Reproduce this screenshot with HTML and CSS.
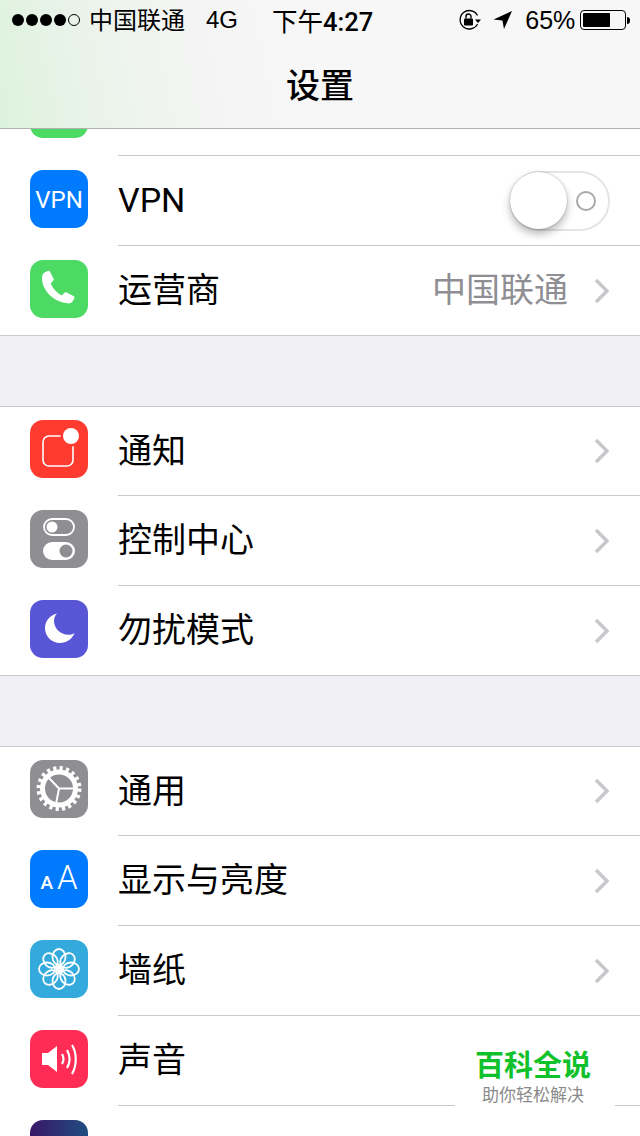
FILE: index.html
```html
<!DOCTYPE html>
<html lang="zh-CN">
<head>
    <meta charset="UTF-8">
    <meta name="viewport" content="width=device-width, initial-scale=1.0">
    <title>设置</title>
    <link rel="stylesheet" href="styles.css">
</head>
<body>

    <header class="nav">
        <div class="status">
            <div class="dots">
                <span class="dot"></span><span class="dot"></span><span class="dot"></span><span class="dot"></span><span class="dot empty"></span>
            </div>
            <span class="carrier">中国联通</span>
            <span class="net">4G</span>
            <span class="time">下午<span class="clock">4:27</span></span>
            <svg class="lock-icon" width="24" height="22" viewBox="0 0 24 22">
                <path d="M19.5 6.5A9.2 9.2 0 1 0 19.5 15" fill="none" stroke="#000" stroke-width="1.3"/>
                <path d="M17 10.5h6l-3 3.4z" fill="#000"/>
                <rect x="6" y="9.500" width="9" height="7" rx="1" fill="#000"/>
                <path d="M8 9.500V7.500a2.500 2.500 0 0 1 5 0v2" fill="none" stroke="#000" stroke-width="1.4"/>
            </svg>
            <svg class="arrow-icon" width="20" height="20" viewBox="0 0 20 20">
                <path d="M0.500 9.500L19 1l-8 18-1.600-8.600z" fill="#000"/>
            </svg>
            <span class="percent">65%</span>
            <div class="battery"><div class="battery-fill"></div></div>
            <div class="battery-nub"></div>
        </div>
        <h1 class="title">设置</h1>
    </header>

    <section class="group top-group">
        <div class="row row-cut">
            <div class="icon green"></div>
            <div class="row-body"></div>
        </div>
        <div class="row">
            <div class="icon blue vpn-text">VPN</div>
            <div class="row-body">
                <span class="label latin">VPN</span>
                <div class="toggle"><div class="knob"></div><div class="ring"></div></div>
            </div>
        </div>
        <div class="row">
            <div class="icon green">
                <svg width="58" height="58" viewBox="0 0 58 58">
                    <path d="M14.500 12.500l3.200-1.600c1-.4 1.800-.1 2.400 1l3.400 6.600c.5 1 .2 1.800-.6 2.600l-2.200 2.100c1.800 5 6.200 9.800 11.200 12.200l2.300-2.300c.8-.8 1.600-1 2.600-.5l6.600 3.500c1.200.7 1.400 1.600.8 2.700l-1.600 2.500c-1.100 1.600-3 2.500-5 2C22 41.500 12 29.500 12 18c0-2.500.8-4.300 2.500-5.500z" fill="#fff"/>
                </svg>
            </div>
            <div class="row-body">
                <span class="label">运营商</span>
                <span class="value">中国联通</span>
                <svg class="chevron" width="16" height="26" viewBox="0 0 16 26"><path d="M2 2l11 11L2 24" fill="none" stroke="#c7c7cc" stroke-width="3.400"/></svg>
            </div>
        </div>
    </section>

    <section class="group boxed">
        <div class="row">
            <div class="icon red">
                <svg width="58" height="58" viewBox="0 0 58 58">
                    <rect x="13" y="16" width="30" height="30" rx="6" fill="none" stroke="#fff" stroke-width="1.600"/>
                    <circle cx="41" cy="16" r="10.500" fill="#ff3b30"/>
                    <circle cx="41" cy="16" r="8" fill="#fff"/>
                </svg>
            </div>
            <div class="row-body">
                <span class="label">通知</span>
                <svg class="chevron" width="16" height="26" viewBox="0 0 16 26"><path d="M2 2l11 11L2 24" fill="none" stroke="#c7c7cc" stroke-width="3.400"/></svg>
            </div>
        </div>
        <div class="row">
            <div class="icon gray">
                <svg width="58" height="58" viewBox="0 0 58 58">
                    <rect x="14" y="9" width="30" height="16" rx="8" fill="none" stroke="#fff" stroke-width="1.800"/>
                    <circle cx="22" cy="17" r="5.500" fill="#fff"/>
                    <rect x="13" y="32" width="32" height="18" rx="9" fill="#fff"/>
                    <circle cx="36" cy="41" r="6.500" fill="#8e8e93"/>
                </svg>
            </div>
            <div class="row-body">
                <span class="label">控制中心</span>
                <svg class="chevron" width="16" height="26" viewBox="0 0 16 26"><path d="M2 2l11 11L2 24" fill="none" stroke="#c7c7cc" stroke-width="3.400"/></svg>
            </div>
        </div>
        <div class="row">
            <div class="icon indigo">
                <svg width="58" height="58" viewBox="0 0 58 58">
                    <path d="M27 13.500C20 15 15 21 15 28c0 8.500 6.800 15 15 15 6.500 0 12-3.800 14.500-9.700-2 1-4 1.500-6 1.500-8.500 0-14.500-6.500-14.500-14 0-2.700 1-5.300 3-7.300z" fill="#fff"/>
                </svg>
            </div>
            <div class="row-body">
                <span class="label">勿扰模式</span>
                <svg class="chevron" width="16" height="26" viewBox="0 0 16 26"><path d="M2 2l11 11L2 24" fill="none" stroke="#c7c7cc" stroke-width="3.400"/></svg>
            </div>
        </div>
    </section>

    <section class="group boxed open-bottom">
        <div class="row">
            <div class="icon gray">
                <svg width="58" height="58" viewBox="0 0 58 58">
                    <circle cx="29" cy="28.500" r="20" fill="none" stroke="#fff" stroke-width="5" stroke-dasharray="3.140 3.140"/>
                    <circle cx="29" cy="28.500" r="16.500" fill="none" stroke="#fff" stroke-width="5"/>
                    <path d="M29 28.500H45M29 28.500L26 44M29 28.500L19 18" fill="none" stroke="#fff" stroke-width="2"/>
                </svg>
            </div>
            <div class="row-body">
                <span class="label">通用</span>
                <svg class="chevron" width="16" height="26" viewBox="0 0 16 26"><path d="M2 2l11 11L2 24" fill="none" stroke="#c7c7cc" stroke-width="3.400"/></svg>
            </div>
        </div>
        <div class="row">
            <div class="icon blue aa-text"><span class="small-a">A</span><span class="big-a">A</span></div>
            <div class="row-body">
                <span class="label">显示与亮度</span>
                <svg class="chevron" width="16" height="26" viewBox="0 0 16 26"><path d="M2 2l11 11L2 24" fill="none" stroke="#c7c7cc" stroke-width="3.400"/></svg>
            </div>
        </div>
        <div class="row">
            <div class="icon teal">
                <svg width="58" height="58" viewBox="0 0 58 58">
                    <g fill="none" stroke="#fff" stroke-width="1.800">
                        <ellipse cx="29" cy="17" rx="6.500" ry="8"/>
                        <ellipse cx="29" cy="17" rx="6.500" ry="8" transform="rotate(45 29 29)"/>
                        <ellipse cx="29" cy="17" rx="6.500" ry="8" transform="rotate(90 29 29)"/>
                        <ellipse cx="29" cy="17" rx="6.500" ry="8" transform="rotate(135 29 29)"/>
                        <ellipse cx="29" cy="17" rx="6.500" ry="8" transform="rotate(180 29 29)"/>
                        <ellipse cx="29" cy="17" rx="6.500" ry="8" transform="rotate(225 29 29)"/>
                        <ellipse cx="29" cy="17" rx="6.500" ry="8" transform="rotate(270 29 29)"/>
                        <ellipse cx="29" cy="17" rx="6.500" ry="8" transform="rotate(315 29 29)"/>
                    </g>
                    <circle cx="29" cy="29" r="3.500" fill="#fff"/>
                </svg>
            </div>
            <div class="row-body">
                <span class="label">墙纸</span>
                <svg class="chevron" width="16" height="26" viewBox="0 0 16 26"><path d="M2 2l11 11L2 24" fill="none" stroke="#c7c7cc" stroke-width="3.400"/></svg>
            </div>
        </div>
        <div class="row">
            <div class="icon pink">
                <svg width="58" height="58" viewBox="0 0 58 58">
                    <path d="M12 23h6l9-7v26l-9-7h-6z" fill="#fff"/>
                    <g fill="none" stroke="#fff" stroke-width="2.200">
                        <path d="M32 24c1.800 3 1.800 7 0 10"/>
                        <path d="M37 20c3.200 5.500 3.200 12.500 0 18"/>
                        <path d="M42 15c5 8 5 20 0 29"/>
                    </g>
                </svg>
            </div>
            <div class="row-body">
                <span class="label">声音</span>
            </div>
        </div>
        <div class="row row-end">
            <div class="icon dusk"></div>
            <div class="row-body"></div>
        </div>
    </section>

    <div class="watermark">
        <div class="wm-title">百科全说</div>
        <div class="wm-sub">助你轻松解决</div>
    </div>

</body>
</html>
```

FILE: styles.css
```css
html, body { margin: 0; padding: 0; }
body { position: relative; width: 640px; height: 1136px; overflow: hidden; background: #efeff4; color: #000; font-family: "Liberation Sans", "Noto Sans CJK SC", sans-serif; }

.nav { height: 128px; border-bottom: 1px solid #b2b2b2; background: linear-gradient(78deg, #dcf2dc 0%, #e8f3e8 12%, #f2f4f2 28%, #f7f7f7 50%); }
.status { display: flex; align-items: center; height: 40px; padding-left: 12px; font-size: 24px; }
.dots { display: flex; gap: 2px; }
.dot { width: 12px; height: 12px; border-radius: 50%; background: #000; }
.dot.empty { box-sizing: border-box; background: none; border: 1px solid #000; }
.carrier { margin-left: 9px; padding-bottom: 4px; }
.net { margin-left: 21px; }
.time { margin-left: 34px; font-family: Roboto, "Noto Sans CJK SC", sans-serif; font-size: 25.5px; padding-bottom: 2px; }
.clock { font-weight: 500; }
.lock-icon { margin-left: 85px; }
.arrow-icon { margin-left: 11px; }
.percent { margin-left: 12px; font-size: 25px; }
.battery { box-sizing: border-box; width: 46px; height: 20px; margin-left: 5px; padding: 2px; border: 1px solid #000; border-radius: 4px; }
.battery-fill { width: 27px; height: 100%; background: #000; border-radius: 1px; }
.battery-nub { width: 3px; height: 7px; margin-left: 1px; background: #000; border-radius: 0 3px 3px 0; }
.title { margin: 24px 0 0; font-size: 34px; font-weight: 500; line-height: 44px; text-align: center; }

.group { background: #fff; }
.top-group { border-bottom: 1px solid #c8c7cc; }
.boxed { margin-top: 70px; border-top: 1px solid #c8c7cc; border-bottom: 1px solid #c8c7cc; }
.open-bottom { border-bottom: none; }
.row { display: flex; height: 90px; }
.boxed .row:first-child { height: 89px; }
.boxed .row:first-child .icon { margin-top: 13px; }
.top-group .row:last-child, .boxed .row:last-child { height: 89px; }
.top-group .row:last-child .row-body, .boxed .row:last-child .row-body { border-bottom: none; }
.row-cut { height: 27px; overflow: hidden; }
.row-cut .icon { margin-top: -49px; }
.boxed .row-end:last-child { height: 30px; overflow: hidden; }

.icon { flex: none; width: 58px; height: 58px; margin: 14px 0 0 30px; border-radius: 13px; overflow: hidden; color: #fff; }
.icon svg { display: block; }
.green { background: #4cd964; }
.blue { background: #007aff; }
.red { background: #ff3b30; }
.gray { background: #8e8e93; }
.indigo { background: #5856d6; }
.teal { background: #34aadc; }
.pink { background: #ff2d55; }
.dusk { background: linear-gradient(90deg, #3a1768, #1f4d80); }

.vpn-text { font-family: Roboto, sans-serif; font-size: 24px; line-height: 60px; text-align: center; }
.aa-text { display: flex; justify-content: center; align-items: baseline; line-height: 56px; font-family: Roboto, sans-serif; }
.small-a { font-size: 19px; font-weight: 500; margin-right: 4px; }
.big-a { font-size: 33px; font-weight: 300; }

.row-body { flex: 1; display: flex; align-items: center; margin-left: 30px; padding-right: 30px; border-bottom: 1px solid #c8c7cc; }
.label { font-size: 34px; padding-bottom: 6px; }
.latin { font-family: Roboto, sans-serif; padding-bottom: 2px; }
.value { margin-left: auto; font-size: 34px; padding-bottom: 6px; color: #8e8e93; }
.chevron { flex: none; margin-left: 26px; }
.label + .chevron { margin-left: auto; }

.toggle { box-sizing: border-box; display: flex; align-items: center; width: 100px; height: 60px; margin-left: auto; border: 2px solid #e5e5e5; border-radius: 30px; }
.knob { width: 57px; height: 57px; margin-left: -2px; border-radius: 50%; background: #fff; box-shadow: 0 5px 8px rgba(0,0,0,.28), 0 0 2px rgba(0,0,0,.3); }
.ring { box-sizing: border-box; width: 20px; height: 20px; margin-left: 9px; border: 2px solid #a8a8a8; border-radius: 50%; }

.watermark { box-sizing: border-box; position: absolute; left: 455px; top: 1040px; width: 160px; height: 72px; padding-right: 4px; background: #fff; text-align: center; }
.wm-title { margin-top: 8px; font-size: 29px; font-weight: 700; line-height: 36px; color: #0fc12a; }
.wm-sub { font-size: 17px; line-height: 24px; color: #8a8a8a; }
```
